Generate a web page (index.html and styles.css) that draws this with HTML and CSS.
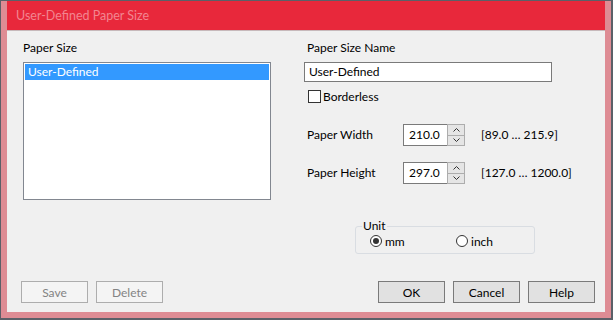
FILE: index.html
```
<!DOCTYPE html>
<html lang="en">

<head>
    <meta charset="UTF-8">
    <title>User-Defined Paper Size</title>
    <link rel="stylesheet" href="styles.css">
</head>

<body>

    <div class="window">
        <div class="titlebar">User-Defined Paper Size</div>

        <div class="content">
            <div class="top">
                <div class="left">
                    <label class="caption">Paper Size</label>
                    <div class="listbox">
                        <div class="item selected">User-Defined</div>
                    </div>
                </div>

                <div class="right">
                    <label class="caption">Paper Size Name</label>
                    <div class="textbox">User-Defined</div>

                    <div class="check-row">
                        <span class="checkbox"></span>
                        <span>Borderless</span>
                    </div>

                    <div class="spin-row first">
                        <span class="spin-label">Paper Width</span>
                        <div class="spin">
                            <div class="spin-value">210.0</div>
                            <div class="spin-buttons">
                                <span class="spin-btn"><svg width="7" height="4" viewBox="0 0 7 4"><path d="M0.5 3.5 L3.5 0.5 L6.5 3.5" fill="none" stroke="#333" /></svg></span>
                                <span class="spin-btn"><svg width="7" height="4" viewBox="0 0 7 4"><path d="M0.5 0.5 L3.5 3.5 L6.5 0.5" fill="none" stroke="#333" /></svg></span>
                            </div>
                        </div>
                        <span class="range">[89.0 … 215.9]</span>
                    </div>

                    <div class="spin-row">
                        <span class="spin-label">Paper Height</span>
                        <div class="spin">
                            <div class="spin-value">297.0</div>
                            <div class="spin-buttons">
                                <span class="spin-btn"><svg width="7" height="4" viewBox="0 0 7 4"><path d="M0.5 3.5 L3.5 0.5 L6.5 3.5" fill="none" stroke="#333" /></svg></span>
                                <span class="spin-btn"><svg width="7" height="4" viewBox="0 0 7 4"><path d="M0.5 0.5 L3.5 3.5 L6.5 0.5" fill="none" stroke="#333" /></svg></span>
                            </div>
                        </div>
                        <span class="range">[127.0 … 1200.0]</span>
                    </div>

                    <fieldset class="group">
                        <legend>Unit</legend>
                        <div class="radios">
                            <span class="radio-item"><span class="radio checked"></span>mm</span>
                            <span class="radio-item"><span class="radio"></span>inch</span>
                        </div>
                    </fieldset>
                </div>
            </div>

            <div class="buttons">
                <div class="btn-group">
                    <button disabled>Save</button>
                    <button disabled>Delete</button>
                </div>
                <div class="btn-group">
                    <button>OK</button>
                    <button>Cancel</button>
                    <button>Help</button>
                </div>
            </div>
        </div>
    </div>

</body>

</html>
```

FILE: styles.css
```
html,
body {
    margin: 0;
    height: 100%;
    font-family: Lato, "Liberation Sans", Arial, sans-serif;
    font-size: 12px;
    color: #000;
}

.window {
    box-sizing: border-box;
    width: 613px;
    height: 320px;
    display: flex;
    flex-direction: column;
    background: #de8c94;
    border-style: solid;
    border-color: #5b6068;
    border-width: 1px 2px 2px 1px;
    padding: 0 6px 6px 6px;
}

.titlebar {
    height: 29px;
    line-height: 29px;
    padding-left: 9px;
    background: #e8283b;
    color: #f28590;
    border-bottom: 1px solid #c7b9bb;
    font-size: 12.5px;
}

.content {
    flex: 1;
    display: flex;
    flex-direction: column;
    background: #f0f0f0;
    padding: 9px 10px 9px 14px;
}

.top {
    display: flex;
    gap: 33px;
    margin-left: 2px;
}

.caption {
    display: block;
    line-height: 16px;
}

.left {
    width: 248px;
    flex-shrink: 0;
}

.listbox {
    box-sizing: border-box;
    width: 248px;
    height: 138px;
    margin-top: 6px;
    border: 1px solid #828790;
    background: #fff;
    padding: 1px;
}

.item {
    height: 16px;
    line-height: 16px;
    padding-left: 3px;
}

.item.selected {
    background: #3399ff;
    color: #fff;
}

.right {
    flex: 1;
}

.right .caption {
    padding-left: 3px;
}

.textbox {
    box-sizing: border-box;
    width: 248px;
    height: 20px;
    line-height: 18px;
    margin-top: 6px;
    border: 1px solid #7a7a7a;
    background: #fff;
    padding-left: 4px;
}

.check-row {
    display: flex;
    align-items: center;
    gap: 2px;
    margin-top: 8px;
    margin-left: 4px;
    height: 13px;
}

.checkbox {
    box-sizing: border-box;
    width: 13px;
    height: 13px;
    border: 1px solid #333;
    background: #fff;
}

.spin-row {
    display: flex;
    align-items: center;
    height: 22px;
    line-height: 16px;
    margin-top: 16px;
    white-space: nowrap;
}

.spin-row.first {
    margin-top: 21px;
}

.spin-label {
    box-sizing: border-box;
    flex-shrink: 0;
    width: 99px;
    padding-left: 3px;
}

.spin {
    display: flex;
    flex-shrink: 0;
    height: 22px;
}

.spin-value {
    box-sizing: border-box;
    width: 44px;
    height: 22px;
    line-height: 20px;
    border: 1px solid #7a7a7a;
    border-right: none;
    background: #fff;
    padding-left: 5px;
}

.spin-buttons {
    box-sizing: border-box;
    width: 18px;
    display: flex;
    flex-direction: column;
    border: 1px solid #adadad;
    background: #adadad;
    gap: 1px;
}

.spin-btn {
    flex: 1;
    display: flex;
    align-items: center;
    justify-content: center;
    background: #e5e5e5;
}

.range {
    margin-left: 16px;
}

.group {
    box-sizing: border-box;
    width: 180px;
    min-width: 0;
    margin: 35px 0 0 51px;
    padding: 0 0 5px 6px;
    border: 1px solid #d9dde2;
    border-radius: 3px;
}

.group legend {
    padding: 0 1px;
    line-height: 14px;
}

.radios {
    display: flex;
    margin-top: 1px;
    margin-left: 8px;
    height: 14px;
}

.radio-item {
    width: 86px;
    display: flex;
    align-items: center;
    gap: 3px;
}

.radio-item:last-child {
    width: auto;
}

.radio {
    box-sizing: border-box;
    width: 12px;
    height: 12px;
    border: 1px solid #333;
    border-radius: 50%;
    background: #fff;
    display: flex;
    align-items: center;
    justify-content: center;
}

.radio.checked::after {
    content: "";
    width: 6px;
    height: 6px;
    border-radius: 50%;
    background: #333;
}

.buttons {
    margin-top: auto;
    display: flex;
    justify-content: space-between;
}

.btn-group {
    display: flex;
    gap: 8px;
}

button {
    box-sizing: border-box;
    width: 67px;
    height: 22px;
    padding: 0;
    font-family: Lato, "Liberation Sans", Arial, sans-serif;
    font-size: 12px;
    color: #000;
    background: #e1e1e1;
    border: 1px solid #7a7a7a;
}

button:disabled {
    background: #f4f4f4;
    border-color: #adadad;
    color: #838383;
}
```
